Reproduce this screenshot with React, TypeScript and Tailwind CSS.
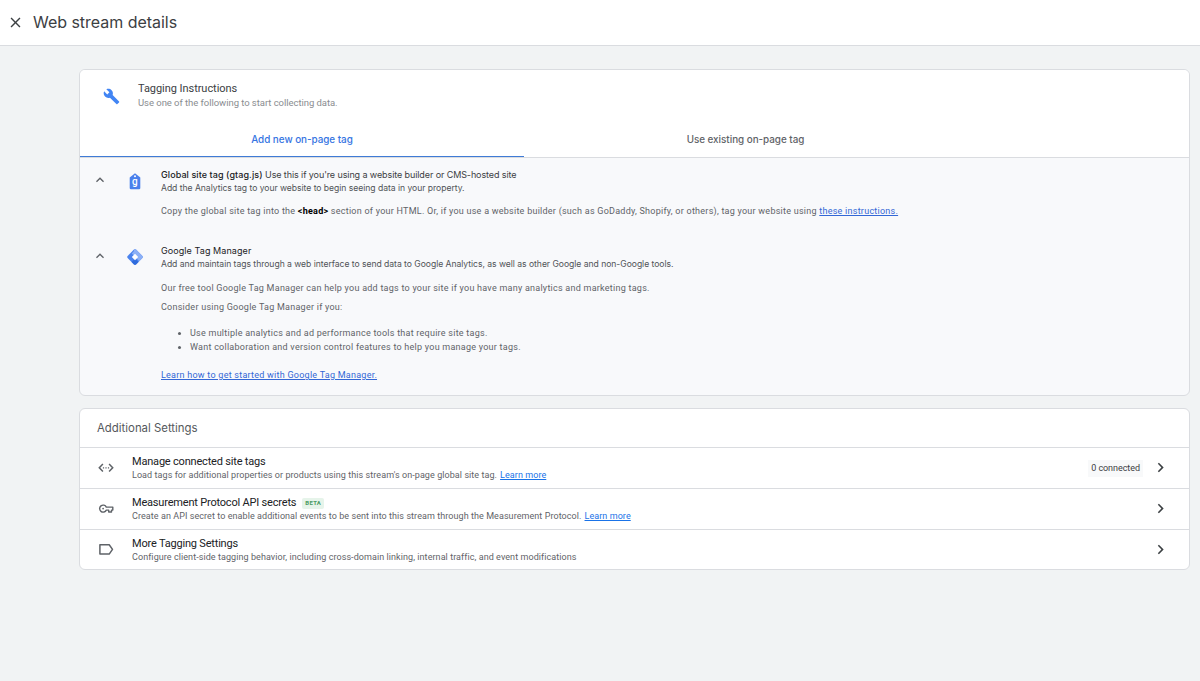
import type { ReactNode } from "react"
import { MdBuild, MdChevronRight, MdClose, MdKeyboardArrowUp } from "react-icons/md"

function GtagIcon() {
  return (
    <svg width="12" height="17" viewBox="0 0 12 17">
      <path d="M6 0.3 L11.3 4.6 V15 a1.3 1.3 0 0 1-1.3 1.3 H2 A1.3 1.3 0 0 1 0.7 15 V4.6 Z" fill="#4a80ec" />
      <circle cx="6" cy="3.3" r="1" fill="#fff" />
      <text x="6" y="12.3" textAnchor="middle" fontFamily="Roboto, sans-serif" fontSize="10" fontWeight="500" fill="#fff">
        g
      </text>
    </svg>
  )
}

function TagManagerIcon() {
  return (
    <svg width="16" height="16" viewBox="0 0 16 16">
      <path d="M7 0.6 Q8 -0.2 9 0.6 L15.4 7 Q16.2 8 15.4 9 L9 15.4 Q8 16.2 7 15.4 L0.6 9 Q-0.2 8 0.6 7 Z" fill="#4a83ee" />
      <path d="M7 0.6 Q8 -0.2 9 0.6 L15.4 7 Q16.2 8 15.4 9 L12.2 12.2 L4.8 4.4 L7 2 Z" fill="#8cb0f6" />
      <path d="M4.6 13 L8 9.6 L11.5 12.9 L9 15.4 Q8 16.2 7 15.4 Z" fill="#2f6bdc" />
      <path d="M8 4.8 L11.2 8 L8 11.2 L4.8 8 Z" fill="#fff" />
    </svg>
  )
}

function ConnectedTagsIcon() {
  return (
    <svg width="16" height="16" viewBox="0 0 16 16" fill="none" stroke="#5f6368" strokeWidth="1.5">
      <path d="M4.9 4.1 L1.3 7.8 L4.9 11.5 M11.1 4.1 L14.7 7.8 L11.1 11.5" />
      <path d="M4.9 7.8 H6.1 M7.4 7.8 H8.6 M9.9 7.8 H11.1" strokeWidth="1.3" />
    </svg>
  )
}

function KeyIcon() {
  return (
    <svg width="16" height="16" viewBox="0 0 16 16" fill="none" stroke="#5f6368" strokeWidth="1.4" strokeLinejoin="round">
      <path d="M8.3 6.1 H14.8 V9.1 H13.5 V11 H10.7 V9.1 H8.3 A3.5 3.5 0 1 1 8.3 6.1 Z" />
      <circle cx="5.1" cy="7.6" r="0.9" fill="#5f6368" stroke="none" />
    </svg>
  )
}

function LabelIcon() {
  return (
    <svg width="16" height="16" viewBox="0 0 16 16" fill="none" stroke="#5f6368" strokeWidth="1.5" strokeLinejoin="round">
      <path d="M1.9 2.7 H11.2 L14.5 7.4 L11.2 12.1 H1.9 Z" />
    </svg>
  )
}

interface TagOptionProps {
  icon: ReactNode
  title: ReactNode
  subtitle: ReactNode
  children: ReactNode
}

function TagOption({ icon, title, subtitle, children }: TagOptionProps) {
  return (
    <div className="flex">
      <button className="mt-1 ml-[13px] flex h-4 w-3.5 items-center justify-center text-[#5f6368]">
        <MdKeyboardArrowUp size={16} className="shrink-0" />
      </button>
      <div className="mt-[5px] ml-5 flex h-4 w-4 items-center justify-center">{icon}</div>
      <div className="ml-[18px] flex-1">
        <div className="font-[Inter,sans-serif] text-[9px] leading-[14px] tracking-[-0.1px] text-[#3c4043]">{title}</div>
        <div className="font-[Inter,sans-serif] text-[8.6px] leading-[13px] tracking-[-0.035px] text-[#505357]">{subtitle}</div>
        {children}
      </div>
    </div>
  )
}

interface SettingRowProps {
  icon: ReactNode
  title: string
  badge?: string
  description: string
  link?: string
  status?: string
}

function SettingRow({ icon, title, badge, description, link, status }: SettingRowProps) {
  return (
    <div className="flex h-[41px] items-center border-t border-[#dadce0] pr-[19px] last:h-10">
      <div className="ml-[18px] flex w-4 justify-center">{icon}</div>
      <div className="ml-[18px] flex-1">
        <div className="flex items-center text-[11px] leading-[14px] tracking-[-0.19px] text-[#202124]">
          {title}
          {badge && (
            <span className="ml-1.5 flex h-[11px] items-center rounded-xs bg-[#e6f4ea] px-[3px] text-[6px] font-bold tracking-[0.3px] text-[#4b9b63]">
              {badge}
            </span>
          )}
        </div>
        <div className="text-[9px] leading-3 tracking-[0.07px] text-[#5f6368]">
          {description}
          {link && <a className="ml-[3px] text-[#1a73e8] underline">{link}</a>}
        </div>
      </div>
      {status && (
        <span className="mr-2 bg-[#f8f9fa] px-[3px] text-[9px] leading-[17px] tracking-[-0.05px] text-[#3c4043]">{status}</span>
      )}
      <MdChevronRight size={19} className="mb-px text-[#3c4043]" />
    </div>
  )
}

export default function App() {
  return (
    <div className="flex h-[681px] flex-col bg-[#f1f3f4] font-[Roboto,sans-serif]">
      <header className="flex h-[46px] items-center border-b border-[#dadce0] bg-white pb-px pl-[7px]">
        <MdClose size={17} className="text-[#3c4043]" />
        <h1 className="ml-[9px] font-[Inter,sans-serif] text-base tracking-[-0.03px] text-[#3c4043]">Web stream details</h1>
      </header>

      <main className="flex flex-col gap-3 pt-[23px] pr-[10px] pl-[79px]">
        <section className="flex h-[327px] flex-col overflow-hidden rounded-md border border-[#dadce0] bg-[#f8f9fb]">
          <div className="flex h-[52px] bg-white">
            <MdBuild size={17} className="mt-[18px] ml-[23px] text-[#4285f4]" />
            <div className="mt-3 ml-[18px]">
              <h2 className="text-[11px] leading-[14px] tracking-[-0.05px] text-[#3c4043]">Tagging Instructions</h2>
              <p className="text-[9.5px] leading-[14px] tracking-[-0.05px] text-[#8a8d91]">Use one of the following to start collecting data.</p>
            </div>
          </div>
          <div className="flex h-9 border-b border-[#dadce0] bg-white font-[Inter,sans-serif] text-[9.9px] font-medium tracking-[-0.03px]">
            <button className="h-[35px] w-[444px] border-b border-[#3f7bd6] text-[#3574e2]">Add new on-page tag</button>
            <button className="h-[35px] w-[443px] text-[#5f6368]">Use existing on-page tag</button>
          </div>

          <div className="mt-[10px] text-[9px] tracking-[0.25px] text-[#5f6368]">
            <TagOption
              icon={<GtagIcon />}
              title={
                <>
                  <span className="font-medium tracking-[0.08px] text-[#202124]">Global site tag (gtag.js)</span> Use this if you're using a
                  website builder or CMS-hosted site
                </>
              }
              subtitle="Add the Analytics tag to your website to begin seeing data in your property."
            >
              <p className="mt-[9px] leading-[14px]">
                Copy the global site tag into the <b className="text-black">&lt;head&gt;</b> section of your HTML. Or, if you use a website
                builder (such as GoDaddy, Shopify, or others), tag your website using{" "}
                <a className="text-[#3367d6] underline">these instructions.</a>
              </p>
            </TagOption>
            <div className="h-[26px]" />
            <TagOption
              icon={<TagManagerIcon />}
              title={<span className="tracking-[0.08px] text-[#202124]">Google Tag Manager</span>}
              subtitle="Add and maintain tags through a web interface to send data to Google Analytics, as well as other Google and non-Google tools."
            >
              <p className="mt-2.5 leading-[14px]">
                Our free tool Google Tag Manager can help you add tags to your site if you have many analytics and marketing tags.
              </p>
              <p className="mt-[5px] leading-[14px]">Consider using Google Tag Manager if you:</p>
              <ul className="mt-3 list-disc pl-[29px] leading-[14px]">
                <li>Use multiple analytics and ad performance tools that require site tags.</li>
                <li>Want collaboration and version control features to help you manage your tags.</li>
              </ul>
              <p className="mt-3.5 leading-[14px]">
                <a className="text-[#3367d6] underline">Learn how to get started with Google Tag Manager.</a>
              </p>
            </TagOption>
          </div>
        </section>

        <section className="flex flex-col rounded-md border border-[#dadce0] bg-white">
          <h2 className="flex h-[38px] items-center pt-px pl-[17px] font-[Inter,sans-serif] text-[11.4px] text-[#55585c]">
            Additional Settings
          </h2>
          <SettingRow
            icon={<ConnectedTagsIcon />}
            title="Manage connected site tags"
            description="Load tags for additional properties or products using this stream's on-page global site tag."
            link="Learn more"
            status="0 connected"
          />
          <SettingRow
            icon={<KeyIcon />}
            title="Measurement Protocol API secrets"
            badge="BETA"
            description="Create an API secret to enable additional events to be sent into this stream through the Measurement Protocol."
            link="Learn more"
          />
          <SettingRow
            icon={<LabelIcon />}
            title="More Tagging Settings"
            description="Configure client-side tagging behavior, including cross-domain linking, internal traffic, and event modifications"
          />
        </section>
      </main>
    </div>
  )
}
